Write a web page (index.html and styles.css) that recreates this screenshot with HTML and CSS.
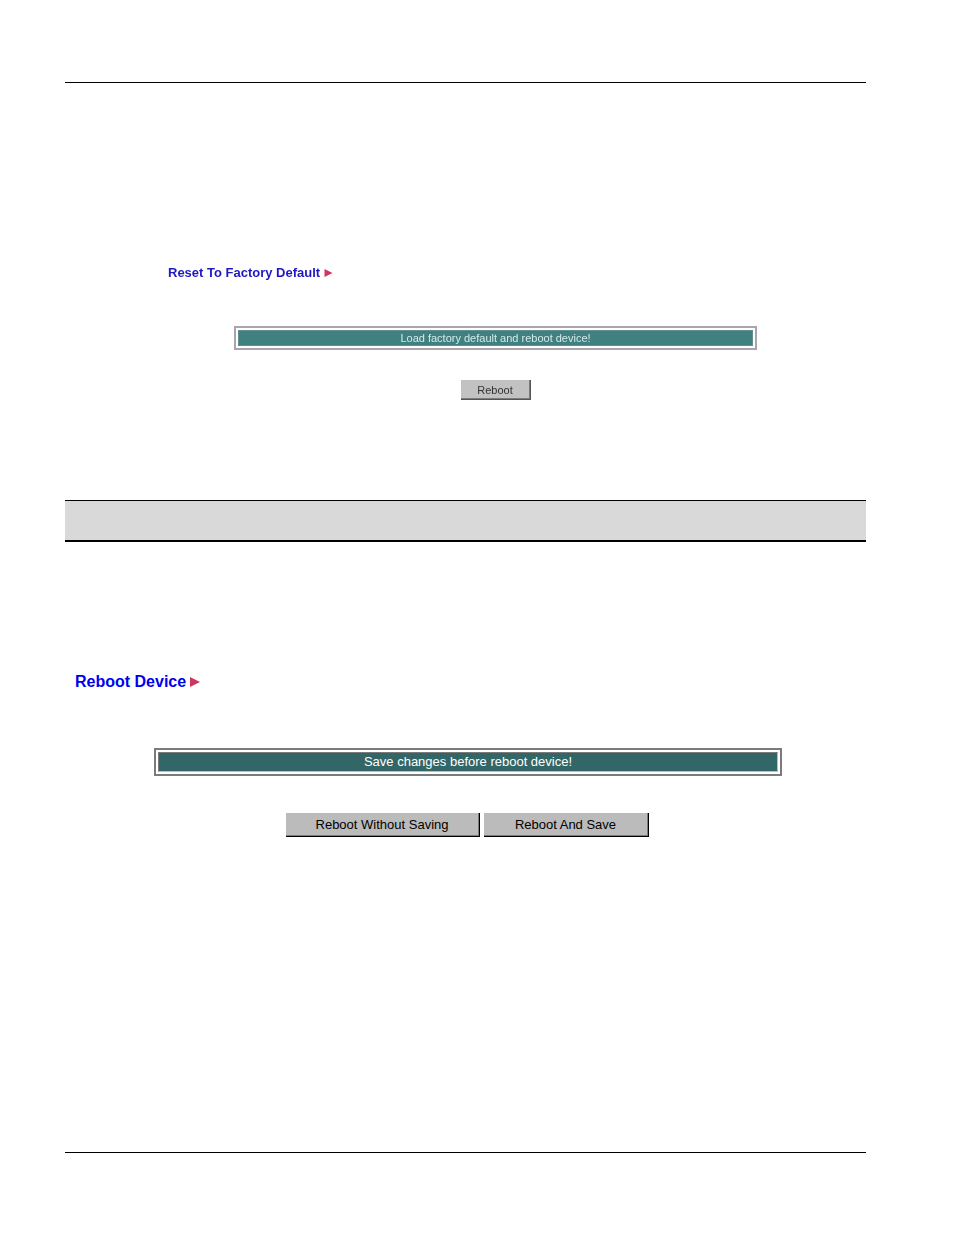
FILE: index.html
```html
<!DOCTYPE html>
<html lang="en">
<head>
<meta charset="utf-8">
<title>Reboot Device</title>
<link rel="stylesheet" href="styles.css">
</head>
<body>
<main class="page">
  <section class="panel panel-reset">
    <h2 class="title title-small">Reset To Factory Default <svg class="arrow" viewBox="0 0 10 10" aria-hidden="true"><path d="M0 0L10 5L0 10Z"/></svg></h2>
    <div class="banner banner-soft"><p class="message">Load factory default and reboot device!</p></div>
    <div class="actions"><button class="button button-small" type="button">Reboot</button></div>
  </section>
  <div class="band"></div>
  <section class="panel panel-reboot">
    <h2 class="title">Reboot Device <svg class="arrow" viewBox="0 0 10 10" aria-hidden="true"><path d="M0 0L10 5L0 10Z"/></svg></h2>
    <div class="banner"><p class="message">Save changes before reboot device!</p></div>
    <div class="actions">
      <button class="button button-wide" type="button">Reboot Without Saving</button>
      <button class="button button-medium" type="button">Reboot And Save</button>
    </div>
  </section>
</main>
</body>
</html>
```
FILE: styles.css
```css
* {
  box-sizing: border-box;
}

body {
  margin: 0;
  background: #fff;
  font-family: "Liberation Sans", Arial, sans-serif;
}

.page {
  display: flex;
  flex-direction: column;
  min-height: calc(100vh - 164px);
  margin: 82px 88px 82px 65px;
  border-top: 1px solid #000;
  border-bottom: 1px solid #000;
}

.panel-reset {
  padding: 180px 40px 100px 103px;
  filter: blur(0.6px);
}

.panel-reboot {
  padding: 130px 0 40px 10px;
}

.title {
  display: flex;
  align-items: center;
  gap: 4px;
  margin: 0;
  color: #0000f0;
  font-size: 16px;
  line-height: 20px;
}

.title-small {
  color: #2018c0;
  font-size: 13px;
}

.arrow {
  width: 10px;
  height: 10px;
  fill: #d03560;
}

.title-small .arrow {
  width: 9px;
  height: 8px;
}

.banner {
  margin: 56px 84px 0 79px;
  padding: 2px;
  border: 2px solid #7b7b7b;
}

.message {
  margin: 0;
  border: 1px solid;
  border-color: #7b7b7b #bdbdbd #bdbdbd #7b7b7b;
  background: #336666;
  color: #fff;
  font-size: 13px;
  line-height: 18px;
  text-align: center;
}

.banner-soft {
  margin: 43px 69px 0 66px;
  border: 2px solid #aaa4ac;
}

.banner-soft .message {
  border-color: #5f8f8f;
  background: #418080;
  color: #d4eaea;
  font-size: 11px;
  line-height: 14px;
}

.actions {
  display: flex;
  justify-content: center;
  gap: 4px;
  margin-top: 37px;
  padding-right: 7px;
}

.panel-reset .actions {
  margin-top: 30px;
  padding-right: 3px;
}

.button {
  height: 24px;
  padding: 0;
  border: 0 solid #000;
  border-width: 0 1px 1px 0;
  border-radius: 0;
  background: #bbb;
  box-shadow: inset -1px -1px #7b7b7b;
  color: #000;
  font: 13px/20px "Liberation Sans", Arial, sans-serif;
}

.button-wide {
  width: 194px;
}

.button-medium {
  width: 165px;
}

.button-small {
  width: 70px;
  height: 20px;
  border-color: #555;
  background: #c2c2c2;
  color: #333;
  font-size: 11px;
}

.band {
  height: 42px;
  border-top: 1px solid #000;
  border-bottom: 2px solid #000;
  background: #d9d9d9;
}
```
